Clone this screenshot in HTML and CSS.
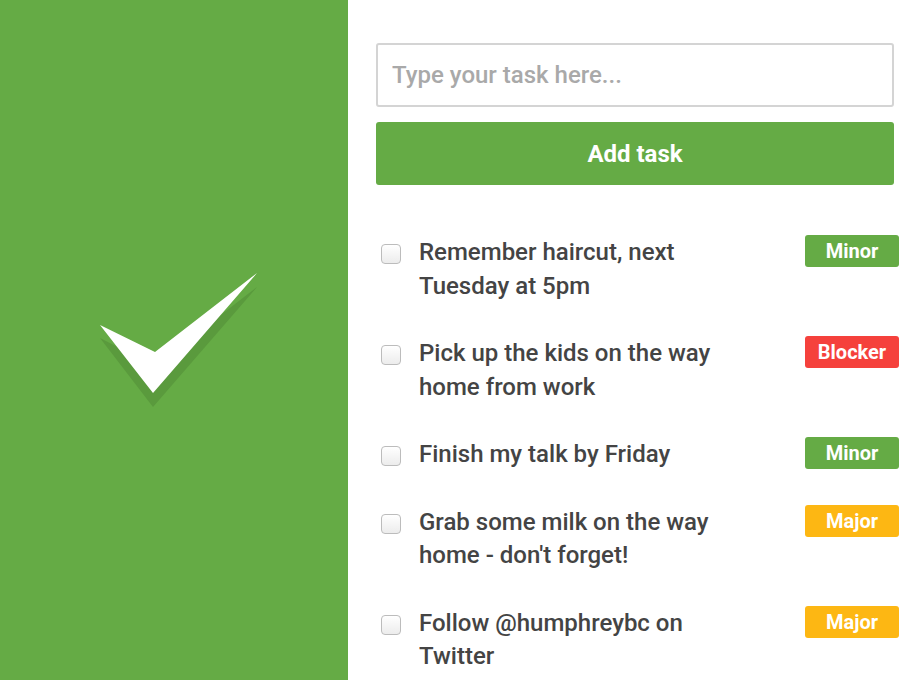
FILE: index.html
```html
<!DOCTYPE html>
<html>
<head>
<meta charset="utf-8">
<link rel="stylesheet" href="styles.css">
</head>
<body>
<div class="app">
  <aside class="brand">
    <svg class="logo" width="160" height="140" viewBox="0 0 160 140">
      <polygon points="0,65 55,93 157,14 53,134" fill="#5a9a3d"/>
      <polygon points="0,52 55,79 157,0 53,120" fill="#ffffff"/>
    </svg>
  </aside>
  <main class="content">
    <input class="task-input" type="text" placeholder="Type your task here...">
    <button class="add-btn">Add task</button>
    <ul class="tasks">
      <li class="task"><span class="box"></span><span class="text">Remember haircut, next Tuesday at 5pm</span><span class="badge minor">Minor</span></li>
      <li class="task"><span class="box"></span><span class="text">Pick up the kids on the way home from work</span><span class="badge blocker">Blocker</span></li>
      <li class="task"><span class="box"></span><span class="text">Finish my talk by Friday</span><span class="badge minor">Minor</span></li>
      <li class="task"><span class="box"></span><span class="text">Grab some milk on the way home - don't forget!</span><span class="badge major">Major</span></li>
      <li class="task"><span class="box"></span><span class="text">Follow @humphreybc on Twitter</span><span class="badge major">Major</span></li>
    </ul>
  </main>
</div>
</body>
</html>
```

FILE: styles.css
```css
html, body {
  margin: 0;
  padding: 0;
  height: 100%;
  overflow: hidden;
  background: #ffffff;
  font-family: Roboto, "Liberation Sans", sans-serif;
}

.app {
  display: flex;
  height: 680px;
}

.brand {
  width: 348px;
  flex: none;
  background: #65ab45;
  display: flex;
  align-items: flex-start;
}

.logo {
  display: block;
  margin: 273px 0 0 100px;
  overflow: visible;
}

.content {
  flex: 1;
  padding: 43px 26px 0 28px;
  display: flex;
  flex-direction: column;
  min-width: 0;
}

.task-input {
  box-sizing: border-box;
  height: 64px;
  width: 100%;
  border: 2px solid #d4d4d4;
  border-radius: 3px;
  padding: 0 14px;
  font-family: Roboto, "Liberation Sans", sans-serif;
  font-size: 24px;
  font-weight: 500;
  color: #444;
  outline: none;
}

.task-input::placeholder {
  color: #a9a9a9;
  opacity: 1;
}

.add-btn {
  margin-top: 15px;
  height: 63px;
  width: 100%;
  border: none;
  border-radius: 3px;
  background: #65ab45;
  color: #ffffff;
  font-family: Roboto, "Liberation Sans", sans-serif;
  font-weight: 700;
  font-size: 24px;
}

.tasks {
  list-style: none;
  margin: 51px -5px 0 0;
  padding: 0;
  display: flex;
  flex-direction: column;
  gap: 34px;
}

.task {
  display: flex;
  align-items: flex-start;
}

.box {
  flex: none;
  box-sizing: border-box;
  width: 20px;
  height: 20px;
  margin: 8px 18px 0 5px;
  border: 1px solid #bcbcbc;
  border-radius: 4px;
  background: linear-gradient(#ffffff, #ececec);
}

.text {
  flex: none;
  width: 330px;
  font-size: 24px;
  font-weight: 500;
  line-height: 33.5px;
  color: #444444;
}

.badge {
  margin-left: auto;
  flex: none;
  width: 94px;
  height: 32px;
  border-radius: 3px;
  color: #ffffff;
  font-weight: 700;
  font-size: 20px;
  line-height: 32px;
  text-align: center;
  margin-top: -1px;
}

.minor { background: #65ab45; }
.blocker { background: #f5413c; }
.major { background: #fdb713; }
```
